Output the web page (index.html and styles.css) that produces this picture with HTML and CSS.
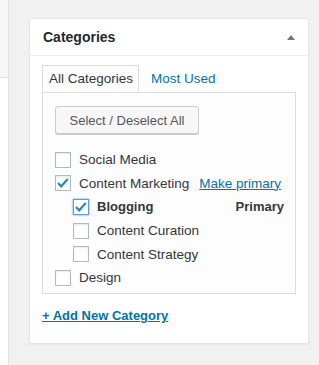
FILE: index.html
```html
<html>
    <head>
        <title>Categories</title>
        <link rel="stylesheet" href="styles.css">
    </head>
    <body>
        <div class="wrap">
            <div class="side">
                <div class="side-top"></div>
            </div>
            <div class="main">
                <div class="postbox">
                    <div class="hndle">
                        <h2>Categories</h2>
                        <span class="toggle"></span>
                    </div>
                    <div class="inside">
                        <ul class="tabs">
                            <li class="tab active">All Categories</li>
                            <li class="tab"><a href="#">Most Used</a></li>
                        </ul>
                        <div class="panel">
                            <button class="button">Select / Deselect All</button>
                            <ul class="checklist">
                                <li class="row">
                                    <span class="check"></span>
                                    <span class="label">Social Media</span>
                                </li>
                                <li class="row">
                                    <span class="check checked"><svg width="14" height="14" viewBox="0 0 14 14"><polyline points="2,7 5.2,10.3 11.8,3" /></svg></span>
                                    <span class="label">Content Marketing</span>
                                    <a href="#" class="primary-link">Make primary</a>
                                </li>
                                <li class="row child">
                                    <span class="check checked focus"><svg width="14" height="14" viewBox="0 0 14 14"><polyline points="2,7 5.2,10.3 11.8,3" /></svg></span>
                                    <span class="label bold">Blogging</span>
                                    <span class="primary">Primary</span>
                                </li>
                                <li class="row child">
                                    <span class="check"></span>
                                    <span class="label">Content Curation</span>
                                </li>
                                <li class="row child">
                                    <span class="check"></span>
                                    <span class="label">Content Strategy</span>
                                </li>
                                <li class="row">
                                    <span class="check"></span>
                                    <span class="label">Design</span>
                                </li>
                            </ul>
                        </div>
                        <a href="#" class="add-new">+ Add New Category</a>
                    </div>
                </div>
                <div class="postbox next"></div>
            </div>
        </div>
    </body>
</html>
```

FILE: styles.css
```css
body{
    margin: 0;
    background: #f1f1f1;
    font-family: "Liberation Sans", Arial, sans-serif;
    color: #32373c;
    overflow: hidden;
}
*{
    box-sizing: border-box;
}
ul{
    list-style: none;
    margin: 0;
    padding: 0;
}
a{
    color: #0073aa;
}

.wrap{
    display: flex;
    height: 365px;
    overflow: hidden;
}
.side{
    width: 9px;
    background: #fff;
    border-right: 1px solid #e2e4e7;
}
.side-top{
    height: 78px;
    background: #f6f6f6;
    border-bottom: 1px solid #e2e2e2;
}
.main{
    margin-left: 20px;
    padding-top: 18px;
    width: 280px;
}

.postbox{
    background: #fff;
    border: 1px solid #e5e5e5;
    box-shadow: 0 1px 1px rgba(0, 0, 0, .04);
}
.postbox.next{
    margin-top: 21px;
    height: 1px;
    border-bottom: none;
}
.hndle{
    display: flex;
    align-items: center;
    justify-content: space-between;
    height: 37px;
    padding: 0 13px 0 13px;
    border-bottom: 1px solid #eee;
}
.hndle h2{
    margin: 0;
    font-size: 14px;
    font-weight: bold;
    color: #23282d;
}
.toggle{
    width: 0;
    height: 0;
    border-left: 4px solid transparent;
    border-right: 4px solid transparent;
    border-bottom: 5px solid #72777c;
}

.inside{
    padding: 9px 12px 0 12px;
    height: 287px;
}
.tabs{
    display: flex;
    font-size: 13.5px;
}
.tab{
    height: 27px;
    line-height: 25px;
    padding: 0 5px 0 6px;
    margin-right: 5px;
    border: 1px solid transparent;
    border-bottom: none;
}
.tab a{
    text-decoration: none;
}
.tab.active{
    background: #fdfdfd;
    border-color: #ddd;
    color: #32373c;
    position: relative;
    margin-bottom: -1px;
    z-index: 1;
}
.panel{
    background: #fdfdfd;
    border: 1px solid #ddd;
    padding: 13px 11px 3px 12px;
}
.button{
    display: block;
    height: 28px;
    width: 144px;
    padding: 0;
    font-family: inherit;
    font-size: 13px;
    color: #555;
    background: #f7f7f7;
    border: 1px solid #ccc;
    border-radius: 3px;
    box-shadow: 0 1px 0 #ccc;
    margin-bottom: 14px;
}

.row{
    display: flex;
    align-items: center;
    height: 23.6px;
    font-size: 13.5px;
}
.row.child{
    padding-left: 18px;
}
.check{
    width: 16px;
    height: 16px;
    flex: none;
    border: 1px solid #b4b9be;
    background: #fff;
    box-shadow: inset 0 1px 2px rgba(0, 0, 0, .1);
    margin-right: 8px;
    display: flex;
    align-items: center;
    justify-content: center;
}
.check svg polyline{
    fill: none;
    stroke: #1e8cbe;
    stroke-width: 2.2;
}
.check.focus{
    border-color: #5b9dd9;
    box-shadow: 0 0 2px rgba(30, 140, 190, .8);
}
.label.bold{
    font-weight: bold;
    font-size: 13px;
}
.primary-link{
    margin-left: 10px;
}
.primary{
    margin-left: auto;
    font-weight: bold;
    font-size: 13px;
}
.add-new{
    display: inline-block;
    margin-top: 13px;
    line-height: 18px;
    font-size: 13px;
    font-weight: bold;
}
```
